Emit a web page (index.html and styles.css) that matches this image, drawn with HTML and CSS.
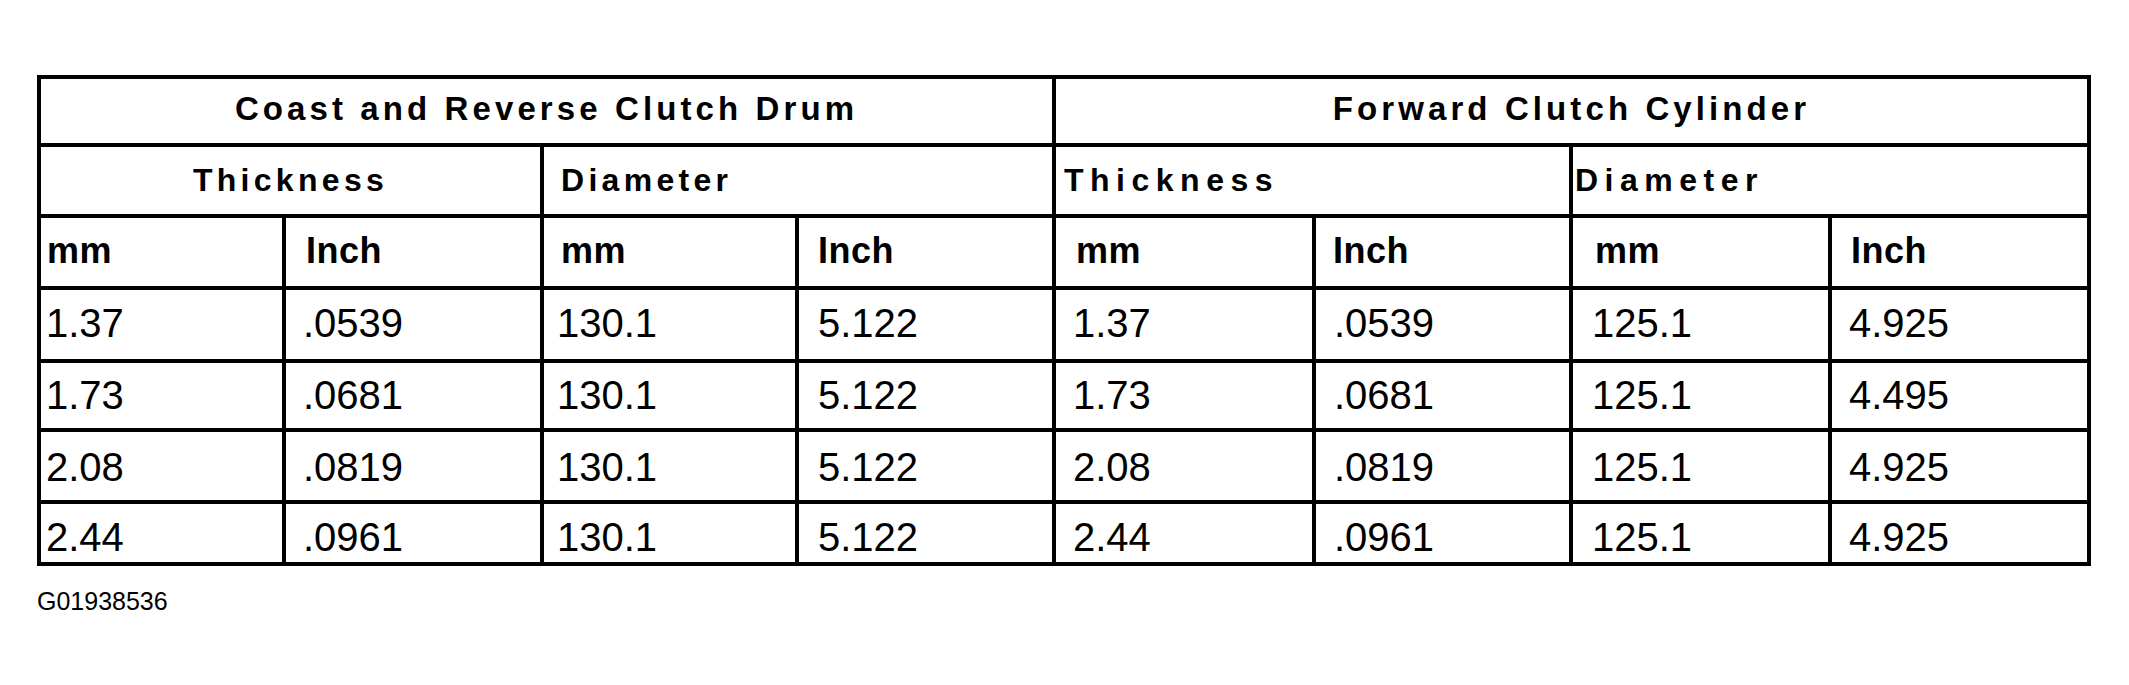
FILE: index.html
```html
<!DOCTYPE html>
<html lang="en">
<head>
<meta charset="utf-8">
<title>Clutch Drum and Cylinder Dimensions</title>
<link rel="stylesheet" href="styles.css">
</head>
<body>
<div class="page">
  <div class="spec">
    <div class="cell title span4">Coast and Reverse Clutch Drum</div>
    <div class="cell title span4">Forward Clutch Cylinder</div>

    <div class="cell sub span2 center">Thickness</div>
    <div class="cell sub span2 s-dia1">Diameter</div>
    <div class="cell sub span2 wide s-thk2">Thickness</div>
    <div class="cell sub span2 wide s-dia2">Diameter</div>

    <div class="cell unit u1">mm</div>
    <div class="cell unit u2">Inch</div>
    <div class="cell unit u3">mm</div>
    <div class="cell unit u4">Inch</div>
    <div class="cell unit u5">mm</div>
    <div class="cell unit u6">Inch</div>
    <div class="cell unit u7">mm</div>
    <div class="cell unit u8">Inch</div>

    <div class="cell val r1 v1">1.37</div>
    <div class="cell val r1 v2">.0539</div>
    <div class="cell val r1 v3">130.1</div>
    <div class="cell val r1 v4">5.122</div>
    <div class="cell val r1 v5">1.37</div>
    <div class="cell val r1 v6">.0539</div>
    <div class="cell val r1 v7">125.1</div>
    <div class="cell val r1 v8">4.925</div>

    <div class="cell val r2 v1">1.73</div>
    <div class="cell val r2 v2">.0681</div>
    <div class="cell val r2 v3">130.1</div>
    <div class="cell val r2 v4">5.122</div>
    <div class="cell val r2 v5">1.73</div>
    <div class="cell val r2 v6">.0681</div>
    <div class="cell val r2 v7">125.1</div>
    <div class="cell val r2 v8">4.495</div>

    <div class="cell val r3 v1">2.08</div>
    <div class="cell val r3 v2">.0819</div>
    <div class="cell val r3 v3">130.1</div>
    <div class="cell val r3 v4">5.122</div>
    <div class="cell val r3 v5">2.08</div>
    <div class="cell val r3 v6">.0819</div>
    <div class="cell val r3 v7">125.1</div>
    <div class="cell val r3 v8">4.925</div>

    <div class="cell val r4 v1">2.44</div>
    <div class="cell val r4 v2">.0961</div>
    <div class="cell val r4 v3">130.1</div>
    <div class="cell val r4 v4">5.122</div>
    <div class="cell val r4 v5">2.44</div>
    <div class="cell val r4 v6">.0961</div>
    <div class="cell val r4 v7">125.1</div>
    <div class="cell val r4 v8">4.925</div>
  </div>
  <div class="code">G01938536</div>
</div>
</body>
</html>
```
FILE: styles.css
```css
html, body {
  margin: 0;
  padding: 0;
  background: #fff;
}

body {
  font-family: "Liberation Sans", Arial, sans-serif;
  color: #000;
}

.page {
  padding: 75px 0 0 37px;
}

.spec {
  display: grid;
  grid-template-columns: 241px 254px 251px 253px 256px 253px 255px 255px;
  grid-template-rows: 64px 67px 68px 69px 65px 68px 58px;
  gap: 4px;
  padding: 4px;
  background: #000;
  width: max-content;
}

.cell {
  background: #fff;
  line-height: 1;
  white-space: nowrap;
  box-sizing: border-box;
}

.span4 { grid-column: span 4; }
.span2 { grid-column: span 2; }
.center { text-align: center; }

.title {
  font-size: 33px;
  font-weight: bold;
  letter-spacing: 4.1px;
  text-align: center;
  padding-top: 13px;
}

.sub {
  font-size: 32px;
  font-weight: bold;
  letter-spacing: 4.3px;
  padding-top: 17px;
}
.sub.wide { letter-spacing: 6.5px; }
.s-dia1 { padding-left: 17px; }
.s-thk2 { padding-left: 8px; }
.s-dia2 { padding-left: 2px; }

.unit {
  font-size: 36px;
  font-weight: bold;
  letter-spacing: 0.5px;
  padding-top: 15px;
}
.u1 { padding-left: 6px; }
.u2 { padding-left: 20px; }
.u3 { padding-left: 17px; }
.u4 { padding-left: 19px; }
.u5 { padding-left: 20px; }
.u6 { padding-left: 17px; }
.u7 { padding-left: 22px; }
.u8 { padding-left: 19px; }

.val {
  font-size: 40px;
  font-weight: normal;
}
.r1 { padding-top: 13px; }
.r2 { padding-top: 12px; }
.r3 { padding-top: 15px; }
.r4 { padding-top: 13px; }

.v1 { padding-left: 5px; }
.v2 { padding-left: 17px; }
.v3 { padding-left: 13px; }
.v4 { padding-left: 19px; }
.v5 { padding-left: 17px; }
.v6 { padding-left: 18px; }
.v7 { padding-left: 19px; }
.v8 { padding-left: 17px; }

.code {
  font-size: 25px;
  line-height: 1;
  margin-top: 23px;
}
```
